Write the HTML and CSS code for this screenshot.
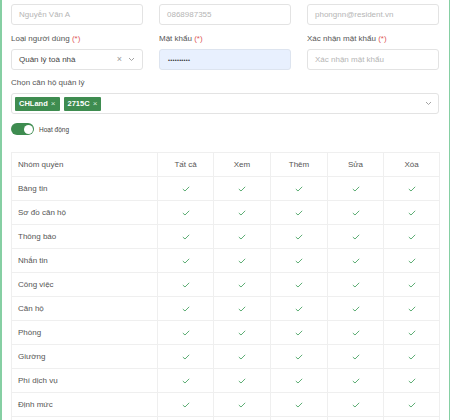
FILE: index.html
```html
<!DOCTYPE html>
<html>
<head>
<meta charset="utf-8">
<link rel="stylesheet" href="styles.css">
</head>
<body>
<div class="frame">
  <div class="grid3 row1">
    <div class="input"><span class="ph">Nguyễn Văn A</span></div>
    <div class="input"><span class="ph">0868987355</span></div>
    <div class="input"><span class="ph">phongnn@resident.vn</span></div>
  </div>
  <div class="grid3 row2">
    <div class="field">
      <div class="label">Loại người dùng <span class="req">(*)</span></div>
      <div class="input select">
        <span class="val">Quản lý toà nhà</span>
        <span class="icons"><span class="clear">×</span><svg class="chev" width="7" height="5" viewBox="0 0 7 5"><polyline points="1,1 3.5,3.5 6,1" fill="none" stroke="#999" stroke-width="0.9"/></svg></span>
      </div>
    </div>
    <div class="field">
      <div class="label">Mật khẩu <span class="req">(*)</span></div>
      <div class="input pw"><span class="dots">••••••••••</span></div>
    </div>
    <div class="field">
      <div class="label">Xác nhận mật khẩu <span class="req">(*)</span></div>
      <div class="input"><span class="ph">Xác nhận mật khẩu</span></div>
    </div>
  </div>
  <div class="label l3">Chọn căn hộ quản lý</div>
  <div class="multi">
    <div class="tags">
      <span class="tag">CHLand <span class="x">×</span></span>
      <span class="tag">2715C <span class="x">×</span></span>
    </div>
    <svg class="chev" width="7" height="5" viewBox="0 0 7 5"><polyline points="1,1 3.5,3.5 6,1" fill="none" stroke="#999" stroke-width="0.9"/></svg>
  </div>
  <div class="toggle-row">
    <span class="switch"><span class="knob"></span></span>
    <span class="tlabel">Hoạt động</span>
  </div>
  <table class="perm">
    <colgroup><col class="c0"><col class="c1"><col class="c2"><col class="c3"><col class="c4"><col class="c5"></colgroup>
    <thead>
      <tr><th class="name">Nhóm quyền</th><th>Tất cả</th><th>Xem</th><th>Thêm</th><th>Sửa</th><th>Xóa</th></tr>
    </thead>
    <tbody id="rows"></tbody>
  </table>
</div>
<script>
  var names = ["Bảng tin","Sơ đồ căn hộ","Thông báo","Nhắn tin","Công việc","Căn hộ","Phòng","Giường","Phí dịch vụ","Định mức",""];
  var chk = '<svg width="8" height="6" viewBox="0 0 8 6"><polyline points="0.8,3 3,5 7.2,0.8" fill="none" stroke="#5fae76" stroke-width="1"/></svg>';
  var html = "";
  names.forEach(function(n){
    html += "<tr><td class='name'>" + n + "</td>";
    for (var i=0;i<5;i++) html += "<td>" + (n ? chk : "") + "</td>";
    html += "</tr>";
  });
  document.getElementById("rows").innerHTML = html;
</script>
</body>
</html>
```
FILE: styles.css
```css
* { box-sizing: border-box; }
html, body { margin: 0; padding: 0; background: #fff; }
body { font-family: "Liberation Sans", Arial, sans-serif; color: #555; }
.frame {
  width: 450px;
  height: 420px;
  overflow: hidden;
  border-left: 2px solid #86cfa3;
  border-right: 1px solid #86cfa3;
  padding: 4px 10px 0 9px;
}
.grid3 {
  display: grid;
  grid-template-columns: 132px 132px 132px;
  column-gap: 16px;
}
.input {
  height: 21px;
  border: 1px solid #e3e3e3;
  border-radius: 3px;
  display: flex;
  align-items: center;
  padding: 0 7px;
  font-size: 8px;
}
.ph { color: #b5b5b5; }
.row2 { margin-top: 8px; }
.label {
  font-size: 8px;
  line-height: 12px;
  color: #555;
  margin-bottom: 4px;
}
.req { color: #e05a5a; }
.select { justify-content: space-between; }
.select .val { color: #444; }
.icons { display: flex; align-items: center; gap: 6px; }
.clear { color: #999; font-size: 9px; line-height: 1; }
.pw { background: #e8f0fe; border-color: #dde4ef; }
.dots { color: #333; font-size: 5.5px; letter-spacing: 0.3px; padding-left: 1px; }
.l3 { margin-top: 7px; }
.multi {
  height: 21px;
  border: 1px solid #e3e3e3;
  border-radius: 3px;
  display: flex;
  align-items: center;
  justify-content: space-between;
  padding: 0 6px 0 3px;
}
.tags { display: flex; gap: 4px; }
.tag {
  background: #3e8c50;
  color: #fff;
  font-size: 7.5px;
  font-weight: bold;
  height: 14px;
  line-height: 14px;
  padding: 0 4px;
  border-radius: 1px;
}
.tag .x { font-weight: normal; color: #d5ead9; font-size: 8px; margin-left: 1px; }
.toggle-row {
  display: flex;
  align-items: center;
  gap: 5px;
  margin-top: 9px;
  height: 12px;
}
.switch {
  width: 23px;
  height: 12px;
  border-radius: 6px;
  background: #3e8c50;
  position: relative;
}
.knob {
  position: absolute;
  right: 1.5px;
  top: 1.5px;
  width: 9px;
  height: 9px;
  border-radius: 50%;
  background: #fff;
}
.tlabel { font-size: 6.5px; color: #444; }
.perm {
  margin-top: 17px;
  width: 428px;
  border-collapse: collapse;
  table-layout: fixed;
  font-size: 8px;
  color: #555;
}
.c0 { width: 146px; }
.c1 { width: 56px; }
.c2 { width: 57px; }
.c3 { width: 57px; }
.c4 { width: 56px; }
.c5 { width: 56px; }
.perm th, .perm td {
  border: 1px solid #efefef;
  height: 24px;
  padding: 0;
  text-align: center;
  vertical-align: middle;
  font-weight: normal;
}
.perm .name { text-align: left; padding-left: 6px; }
.perm td svg { display: inline-block; vertical-align: middle; }
```
